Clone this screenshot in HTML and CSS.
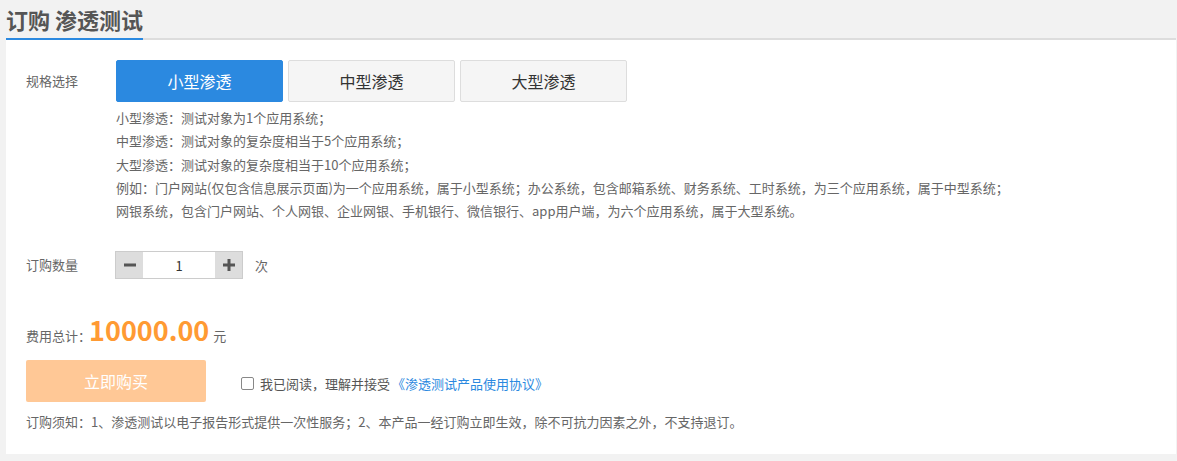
FILE: index.html
```html
<!DOCTYPE html>
<html lang="zh-CN">
<head>
  <meta charset="UTF-8" />
  <meta name="viewport" content="width=device-width, initial-scale=1.0"/>
  <title>订购 渗透测试</title>
  <link rel="stylesheet" href="styles.css">
</head>
<body>

  <div class="page">
    <div class="head">
      <h2 class="title">订购 渗透测试</h2>
    </div>

    <div class="panel">
      <div class="row spec">
        <span class="label">规格选择</span>
        <div class="spec-body">
          <div class="specs">
            <button class="active">小型渗透</button>
            <button>中型渗透</button>
            <button>大型渗透</button>
          </div>
          <ul class="desc">
            <li>小型渗透：测试对象为1个应用系统；</li>
            <li>中型渗透：测试对象的复杂度相当于5个应用系统；</li>
            <li>大型渗透：测试对象的复杂度相当于10个应用系统；</li>
            <li>例如：门户网站(仅包含信息展示页面)为一个应用系统，属于小型系统；办公系统，包含邮箱系统、财务系统、工时系统，为三个应用系统，属于中型系统；</li>
            <li>网银系统，包含门户网站、个人网银、企业网银、手机银行、微信银行、app用户端，为六个应用系统，属于大型系统。</li>
          </ul>
        </div>
      </div>

      <div class="row qty">
        <span class="label">订购数量</span>
        <div class="stepper">
          <span class="step">
            <svg width="12" height="12" viewBox="0 0 12 12"><rect x="0" y="4.5" width="12" height="3" fill="#555"/></svg>
          </span>
          <input type="text" value="1" />
          <span class="step">
            <svg width="12" height="12" viewBox="0 0 12 12"><rect x="0" y="4.5" width="12" height="3" fill="#555"/><rect x="4.5" y="0" width="3" height="12" fill="#555"/></svg>
          </span>
        </div>
        <span class="unit">次</span>
      </div>

      <div class="total">
        <span class="total-label">费用总计：</span>
        <span class="price">10000.00</span>
        <span class="unit">元</span>
      </div>

      <div class="buy-row">
        <button class="buy">立即购买</button>
        <label class="agree">
          <span class="box"></span>
          我已阅读，理解并接受 <a href="#">《渗透测试产品使用协议》</a>
        </label>
      </div>

      <p class="notice">订购须知：1、渗透测试以电子报告形式提供一次性服务；2、本产品一经订购立即生效，除不可抗力因素之外，不支持退订。</p>
    </div>
  </div>

</body>
</html>
```

FILE: styles.css
```css
body {
  font-family: "Microsoft YaHei", "Noto Sans CJK SC", sans-serif;
  background: #f2f2f2;
  margin: 0;
  padding: 0;
  color: #666;
  font-size: 13px;
}

.page {
  margin-left: 6px;
  width: 1170px;
}

.head {
  height: 38px;
  border-bottom: 2px solid #ddd;
}

.title {
  display: inline-block;
  margin: 0 0 -2px 0;
  height: 38px;
  line-height: 38px;
  font-size: 22px;
  font-weight: bold;
  color: #555;
  border-bottom: 2px solid #2b89e0;
}

.panel {
  background: #fff;
  padding: 20px 20px 22px 20px;
}

.row {
  display: flex;
  align-items: flex-start;
}

.label {
  width: 90px;
  flex: none;
  line-height: 42px;
  color: #666;
}

.specs {
  display: flex;
  gap: 5px;
}

.specs button {
  width: 167px;
  height: 42px;
  border: 1px solid #ddd;
  border-radius: 2px;
  background: #f5f5f5;
  color: #333;
  font-family: inherit;
  font-size: 16px;
  cursor: pointer;
}

.specs button.active {
  background: #2b89e0;
  border-color: #2b89e0;
  color: #fff;
}

.desc {
  list-style: none;
  margin: 4px 0 0 0;
  padding: 0;
  line-height: 23.3px;
}

.qty {
  margin-top: 29px;
  align-items: center;
}

.qty .label {
  line-height: 28px;
}

.stepper {
  display: flex;
  height: 28px;
  border: 1px solid #ccc;
  box-sizing: border-box;
  margin-left: -1px;
}

.step {
  width: 27px;
  background: #ddd;
  display: flex;
  align-items: center;
  justify-content: center;
}

.stepper input {
  width: 72px;
  border: none;
  padding: 0;
  text-align: center;
  font-family: inherit;
  font-size: 13px;
  color: #333;
  outline: none;
}

.unit {
  margin-left: 12px;
  color: #666;
}

.total {
  margin-top: 31px;
  height: 40px;
  display: flex;
  align-items: baseline;
}

.price {
  font-size: 27px;
  font-weight: bold;
  color: #ff9a33;
  margin-left: -2px;
  line-height: 40px;
}

.total .unit {
  margin-left: 4px;
}

.buy-row {
  margin-top: 10px;
  display: flex;
  align-items: center;
}

.buy {
  width: 180px;
  height: 42px;
  border: none;
  border-radius: 2px;
  background: #ffc896;
  color: #fff;
  font-family: inherit;
  font-size: 16px;
  cursor: pointer;
}

.agree {
  margin-left: 35px;
  display: flex;
  align-items: center;
  color: #555;
  margin-top: 4px;
}

.box {
  width: 11px;
  height: 11px;
  border: 1px solid #888;
  border-radius: 2px;
  margin-right: 6px;
}

.agree a {
  color: #2b89e0;
  text-decoration: none;
  margin-left: 2px;
}

.notice {
  margin: 10px 0 0 0;
  line-height: 20px;
}
```
